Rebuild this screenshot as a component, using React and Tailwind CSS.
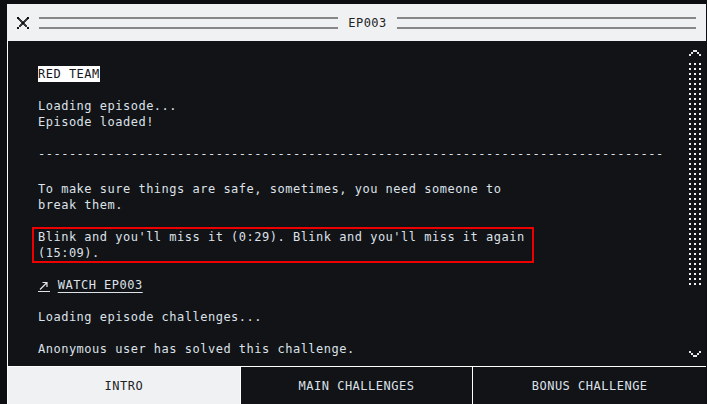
import React from 'react';

const mono = "font-['DejaVu_Sans_Mono','Liberation_Mono',monospace] text-[12px] leading-4 tracking-[0.5px]";

function CloseIcon() {
  return (
    <svg width="12" height="12" viewBox="0 0 12 12" shapeRendering="crispEdges" className="shrink-0">
      <path d="M2 2L10 10M10 2L2 10" stroke="#3a3a3a" strokeWidth="1.7" />
      <rect x="0" y="0" width="2" height="2" fill="#111" />
      <rect x="10" y="0" width="2" height="2" fill="#111" />
      <rect x="0" y="10" width="2" height="2" fill="#111" />
      <rect x="10" y="10" width="2" height="2" fill="#111" />
      <rect x="5" y="5" width="2" height="2" fill="#111" />
    </svg>
  );
}

function DoubleRule() {
  return (
    <div className="flex-1 flex flex-col gap-2">
      <div className="h-[2px] bg-[#878787]"></div>
      <div className="h-[2px] bg-[#878787]"></div>
    </div>
  );
}

function Chevron({ down }) {
  return (
    <svg width="14" height="7" viewBox="0 0 14 7" shapeRendering="crispEdges">
      {down ? (
        <path d="M1 1h2v2h2v2h4v-2h2v-2h2v2h-2v2h-2v2h-4v-2h-2v-2h-2z" fill="#e8e8e8" />
      ) : (
        <path d="M5 0h4v2h2v2h2v2h-2v-2h-2v-2h-4v2h-2v2h-2v-2h2v-2h2z" fill="#e8e8e8" />
      )}
    </svg>
  );
}

function DottedThumb() {
  return (
    <svg width="14" height="224" className="block">
      <defs>
        <pattern id="dots" x="1" y="0" width="5" height="5" patternUnits="userSpaceOnUse">
          <rect width="2" height="2" fill="#f2f2f2" />
        </pattern>
      </defs>
      <rect width="14" height="224" fill="url(#dots)" />
    </svg>
  );
}

function ArrowIcon() {
  return (
    <span className="inline-flex items-end w-[12px] h-[12px] border-b border-[#dfe3ea] align-[-2px]">
      <svg width="12" height="11" viewBox="0 0 12 11">
        <path d="M2 9.5L9 2.5M4.5 2.5H9V7" stroke="#dfe3ea" strokeWidth="1.2" fill="none" />
      </svg>
    </span>
  );
}

const tabs = ['INTRO', 'MAIN CHALLENGES', 'BONUS CHALLENGE'];

export default function App() {
  return (
    <div className={`w-[707px] h-[404px] bg-[#0d0e11] pt-[4px] pl-[7px] pr-[1px] overflow-hidden ${mono}`}>
      <div className="h-[400px] flex flex-col">
        {/* title bar */}
        <div className="h-[37px] shrink-0 bg-[#f0f1f3] flex items-center px-[10px] gap-[10px] text-[#222]">
          <CloseIcon />
          <DoubleRule />
          <span>EP003</span>
          <DoubleRule />
        </div>

        {/* body */}
        <div className="flex-1 min-h-0 flex bg-[#111317] border-l border-white text-[#dde1e8]">
          <div className="flex-1 min-w-0 overflow-hidden pt-[25px] pl-[30px] flex flex-col gap-4 [&>p]:shrink-0">
            <p>
              <span className="inline-block bg-white text-[#15171c]">RED TEAM</span>
            </p>
            <p>
              Loading episode...
              <br />
              Episode loaded!
            </p>
            <p className="whitespace-nowrap mb-[3px]">{'-'.repeat(81)}</p>
            <p className="max-w-[490px]">
              To make sure things are safe, sometimes, you need someone to break them.
            </p>
            <p className="w-[502px] -ml-[6px] -my-[2px] px-1 border-2 border-[#ee0000]">
              Blink and you&apos;ll miss it (0:29). Blink and you&apos;ll miss it again (15:09).
            </p>
            <p>
              <ArrowIcon /> <span className="underline underline-offset-[3px]">WATCH EP003</span>
            </p>
            <p>Loading episode challenges...</p>
            <p className="max-w-[490px]">Anonymous user has solved this challenge.</p>
          </div>

          {/* scrollbar */}
          <div className="w-[14px] mr-[4px] ml-[2px] flex flex-col items-center pt-[9px] pb-[9px]">
            <Chevron />
            <div className="mt-[6px]">
              <DottedThumb />
            </div>
            <div className="flex-1"></div>
            <Chevron down />
          </div>
        </div>

        {/* tabs */}
        <div className="h-[38px] shrink-0 grid grid-cols-3 border-t border-white border-l bg-[#111317] divide-x divide-white">
          {tabs.map((t, i) => (
            <div
              key={t}
              className={`flex items-center justify-center ${
                i === 0 ? 'bg-[#f0f1f3] text-[#222]' : 'text-[#dde1e8]'
              }`}
            >
              {t}
            </div>
          ))}
        </div>
      </div>
    </div>
  );
}
